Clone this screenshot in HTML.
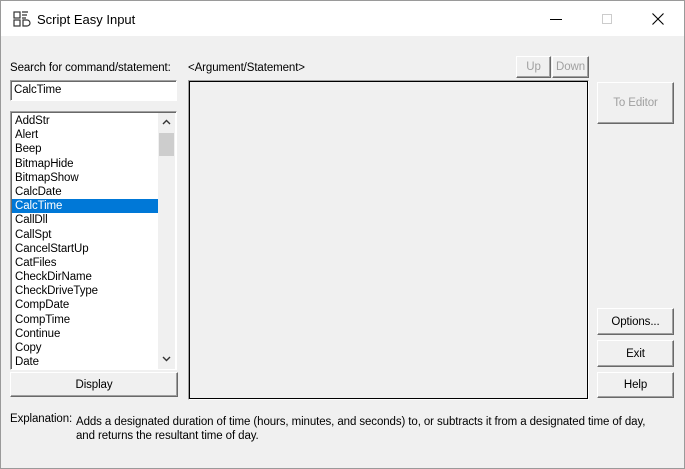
<!DOCTYPE html>
<html><head><style>
*{margin:0;padding:0;box-sizing:border-box}
body{width:685px;height:469px;overflow:hidden;background:#fff;font-family:"Liberation Sans Narrow","Liberation Sans",sans-serif;font-size:11.5px;letter-spacing:-0.1px;color:#000;position:relative}
.win{position:absolute;left:0;top:0;width:685px;height:469px;border:1px solid #9a9a9a;background:#f0f0f0}
.title{position:absolute;left:0;top:0;width:683px;height:35px;background:#fff}
.a{position:absolute;white-space:nowrap}
.btn{position:absolute;background:#f0f0f0;border:1px solid;border-color:#fff #696969 #696969 #fff;box-shadow:inset -1px -1px 0 #a0a0a0;display:flex;align-items:center;justify-content:center}
.dis{color:#a0a0a0}
.sunk{position:absolute;border:1px solid;border-color:#a0a0a0 #fff #fff #a0a0a0;box-shadow:inset 1px 1px 0 #696969;background:#fff}
.item{height:14.2px;line-height:14px;padding-left:3px}
.sel{background:#0078d7;color:#fff}
</style></head><body>
<div class="win">
<div class="title">
<svg class="a" style="left:12px;top:10px" width="18" height="16" viewBox="0 0 18 16" fill="none" stroke="#333" stroke-width="1.2"><rect x="1" y="1" width="6" height="6"/><rect x="1" y="9" width="6" height="6"/><path d="M9 1h6M9 4h5M9 7h4M10 9h4a3 3 0 0 1 0 6h-4z"/></svg>
<div class="a" style="left:36px;top:11px;font-family:'Liberation Sans',sans-serif;font-size:13px;letter-spacing:0">Script Easy Input</div>
<div class="a" style="left:549px;top:18px;width:12px;height:1px;background:#000"></div>
<div class="a" style="left:601px;top:13px;width:10px;height:10px;border:1px solid #ccc"></div>
<svg class="a" style="left:651px;top:12px" width="12" height="12" viewBox="0 0 12 12" stroke="#000" stroke-width="1.1"><path d="M0.5 0.5l11 11M11.5 0.5l-11 11"/></svg>
</div>
<div class="a" style="left:9px;top:61px">Search for command/statement:</div>
<div class="sunk" style="left:9px;top:79px;width:167px;height:21px"><div style="padding:3px 0 0 3px">CalcTime</div></div>
<div class="a" style="left:187px;top:61px">&lt;Argument/Statement&gt;</div>
<div class="btn dis" style="left:515px;top:55px;width:35px;height:22px">Up</div>
<div class="btn dis" style="left:551px;top:55px;width:37px;height:22px">Down</div>
<div class="sunk" style="left:9px;top:110px;width:167px;height:259px;overflow:hidden">
<div style="position:absolute;left:1px;top:2px;width:146px">
<div class="item">AddStr</div><div class="item">Alert</div><div class="item">Beep</div><div class="item">BitmapHide</div><div class="item">BitmapShow</div><div class="item">CalcDate</div><div class="item sel">CalcTime</div><div class="item">CallDll</div><div class="item">CallSpt</div><div class="item">CancelStartUp</div><div class="item">CatFiles</div><div class="item">CheckDirName</div><div class="item">CheckDriveType</div><div class="item">CompDate</div><div class="item">CompTime</div><div class="item">Continue</div><div class="item">Copy</div><div class="item">Date</div>
</div>
<div style="position:absolute;left:147px;top:1px;width:17px;height:256px;background:#f0f0f0">
<svg style="position:absolute;left:4px;top:6px" width="9" height="6" viewBox="0 0 9 6" stroke="#333" stroke-width="1.4" fill="none"><path d="M1 5l3.5-3.5L8 5"/></svg>
<div style="position:absolute;left:1px;top:20px;width:15px;height:23px;background:#cdcdcd"></div>
<svg style="position:absolute;left:4px;top:243px" width="9" height="6" viewBox="0 0 9 6" stroke="#333" stroke-width="1.4" fill="none"><path d="M1 1l3.5 3.5L8 1"/></svg>
</div>
</div>
<div class="btn" style="left:9px;top:371px;width:168px;height:25px">Display</div>
<div class="a" style="left:187px;top:79px;width:401px;height:320px;border:1px solid;border-color:#a0a0a0 #fff #fff #a0a0a0;box-shadow:inset 1px 1px 0 #000,inset -1px -1px 0 #000;background:#f0f0f0"></div>
<div class="btn dis" style="left:596px;top:81px;width:77px;height:42px">To Editor</div>
<div class="btn" style="left:596px;top:307px;width:77px;height:27px">Options...</div>
<div class="btn" style="left:596px;top:339px;width:77px;height:27px">Exit</div>
<div class="btn" style="left:596px;top:371px;width:77px;height:26px">Help</div>
<div class="a" style="left:9px;top:412px">Explanation:</div>
<div class="a" style="left:75px;top:414px;line-height:14px">Adds a designated duration of time (hours, minutes, and seconds) to, or subtracts it from a designated time of day,<br>and returns the resultant time of day.</div>
</div>
</body></html>
